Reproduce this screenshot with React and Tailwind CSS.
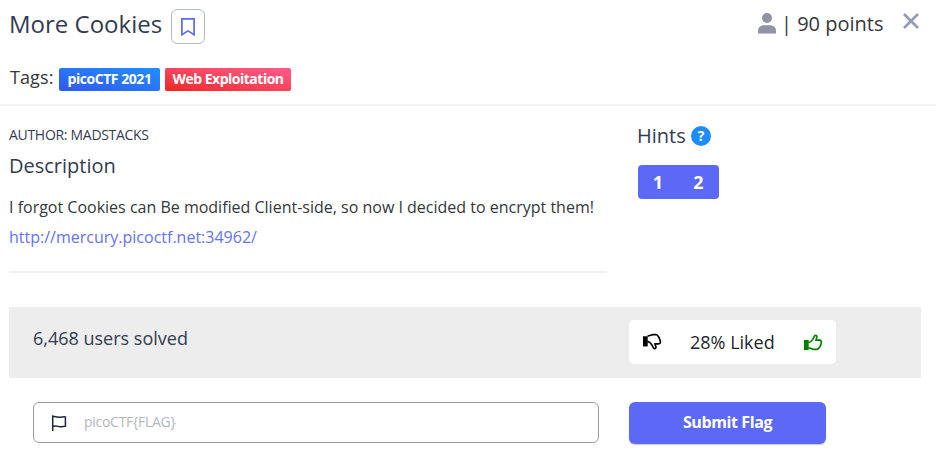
import React from 'react';

const thumb =
  'M5.5 10.6C7.8 10.2 8.8 8.9 9.7 7.4L11.5 4.2C12.3 2.6 14.4 3.4 13.9 5.3L12.9 8.2H16.6C18.1 8.2 18.8 9.2 18.2 10.6C18.3 11.6 18 12.4 17.5 13C17.5 14 17.1 14.8 16.4 15.3C16 16.6 15 17.3 13.6 17.3H11C9.2 17.3 8 16 5.5 15.9';

function Thumb({ className, cuffTop }) {
  return (
    <svg viewBox="0 0 20 20" className={className} fill="none" stroke="currentColor" strokeWidth="1.7" strokeLinejoin="round">
      <path d={thumb} />
      <rect x="1" y={cuffTop} width="4.7" height="10.1" fill="currentColor" stroke="none" />
    </svg>
  );
}

function Header() {
  return (
    <header className="h-[106px] w-[936px] border-b-2 border-[#f3f3f3] pl-[9px]">
      <div className="flex h-[54px] items-start">
        <h1 className="w-[162px] pt-[6px] text-[24px] leading-[36px] text-[#343b50]">More Cookies</h1>
        <button className="mt-[9px] flex h-[35px] w-[34px] items-center justify-center rounded-md border border-[#b4b9c2]">
          <svg viewBox="0 0 14 18" className="h-[18px] w-[14px]" fill="none" stroke="#5b69f6" strokeWidth="1.7">
            <path d="M.9 .9H13.1V16.7L7 12.9L.9 16.7Z" />
          </svg>
        </button>
        <svg viewBox="0 0 18 21" className="mt-[13px] ml-[553px] h-[21px] w-[18px]" fill="#8f93a3">
          <circle cx="9" cy="5" r="5" />
          <path d="M0 20.5V18C0 14.5 2.7 12.3 6 12.3H12C15.3 12.3 18 14.5 18 18V20.5Z" />
        </svg>
        <span className="ml-[5px] w-[114px] pt-[8px] text-[20px] leading-[32px] text-[#35373a]">| 90 points</span>
        <svg viewBox="0 0 16 16" className="mt-[13px] ml-[8px] h-4 w-4" fill="none" stroke="#959cbb" strokeWidth="2.7">
          <path d="M1 1L15 15M15 1L1 15" />
        </svg>
      </div>
      <div className="flex items-start pt-[14px] text-[14px] font-bold text-white">
        <span className="w-[50px] pl-px text-[18px] leading-[18px] font-normal tracking-[0.1px] text-[#35373a]">Tags:</span>
        <span className="flex h-[23px] w-[101px] items-center justify-center rounded-[2px] bg-linear-to-tr from-[#3158ee] to-[#1d8eff] pb-[2px] tracking-[-0.45px]">picoCTF 2021</span>
        <span className="ml-[5px] flex h-[23px] w-[126px] items-center justify-center rounded-[2px] bg-linear-to-tr from-[#ee241c] to-[#ff5a8c] pb-[2px] tracking-[-0.5px]">Web Exploitation</span>
      </div>
    </header>
  );
}

export default function App() {
  return (
    <main className="h-[455px] w-[939px] overflow-hidden bg-white font-['Open_Sans',sans-serif] whitespace-nowrap">
      <Header />
      <section className="flex h-[201px] pl-[9px]">
        <div className="h-[167px] w-[598px] border-b-2 border-[#f0f0f0] pt-[19px]">
          <h6 className="text-[14px] leading-[20px] tracking-[-0.3px] text-[#343b50]">AUTHOR: MADSTACKS</h6>
          <h4 className="pt-[6px] text-[20px] leading-[30px] text-[#343b50]">Description</h4>
          <p className="pt-[11px] text-[16px] leading-[30px] text-[#35373a]">I forgot Cookies can Be modified Client-side, so now I decided to encrypt them!</p>
          <a className="block text-[16px] leading-[30px] text-[#6472f7]">http://mercury.picoctf.net:34962/</a>
        </div>
        <div className="ml-[30px] pt-[15px]">
          <div className="flex h-[29px] items-center">
            <h4 className="w-[54px] text-[20px] text-[#343b50]">Hints</h4>
            <span className="flex h-5 w-5 items-center justify-center rounded-full bg-[#1d8cff] text-[14px] font-bold text-white">?</span>
          </div>
          <div className="mt-[15px] ml-px flex h-[34px] w-[81px] items-center rounded bg-[#5b69f6] text-center text-[18px] font-bold text-white">
            <span className="w-[40px]">1</span>
            <span className="w-[41px]">2</span>
          </div>
        </div>
      </section>
      <section className="ml-[9px] flex h-[71px] w-[912px] bg-[#ededed] pl-[24px]">
        <span className="w-[596px] pt-[17px] text-[18px] leading-[28px] text-[#343b50]">6,468 users solved</span>
        <div className="mt-[13px] flex h-[44px] w-[207px] items-center rounded-[5px] bg-white">
          <Thumb cuffTop="5.6" className="ml-[13px] h-5 w-5 -scale-y-100 text-black" />
          <span className="ml-[28px] w-[86px] text-[18px] text-[#24262b]">28% Liked</span>
          <Thumb cuffTop="8" className="ml-[27px] h-5 w-5 text-[#008000]" />
        </div>
      </section>
      <section className="flex pt-[23px] pl-[33px]">
        <div className="mt-[1px] flex h-[41px] w-[566px] items-center rounded-md border border-[#9a9da8]">
          <svg viewBox="0 0 16 16" className="ml-[17px] h-4 w-4" fill="none" stroke="#1e2637" strokeWidth="1.5">
            <path d="M1.7 .3V16M1.7 1.8C5 .8 7 3 10 2.2C12 1.6 13.5 1.6 14.4 1.9V11.2C12 10.9 11 12.2 7.5 11.4C5 10.7 3.5 11 1.7 11.3" />
          </svg>
          <span className="ml-[17px] pb-[2px] text-[14px] tracking-[-0.28px] text-[#b4b6bf]">picoCTF&#123;FLAG&#125;</span>
        </div>
        <button className="mt-px ml-[30px] h-[42px] w-[197px] rounded-md bg-[#5b69f6] pb-[2px] text-[16px] font-bold tracking-[-0.4px] text-white shadow-[0_1px_1px_#c6caff]">Submit Flag</button>
      </section>
    </main>
  );
}
